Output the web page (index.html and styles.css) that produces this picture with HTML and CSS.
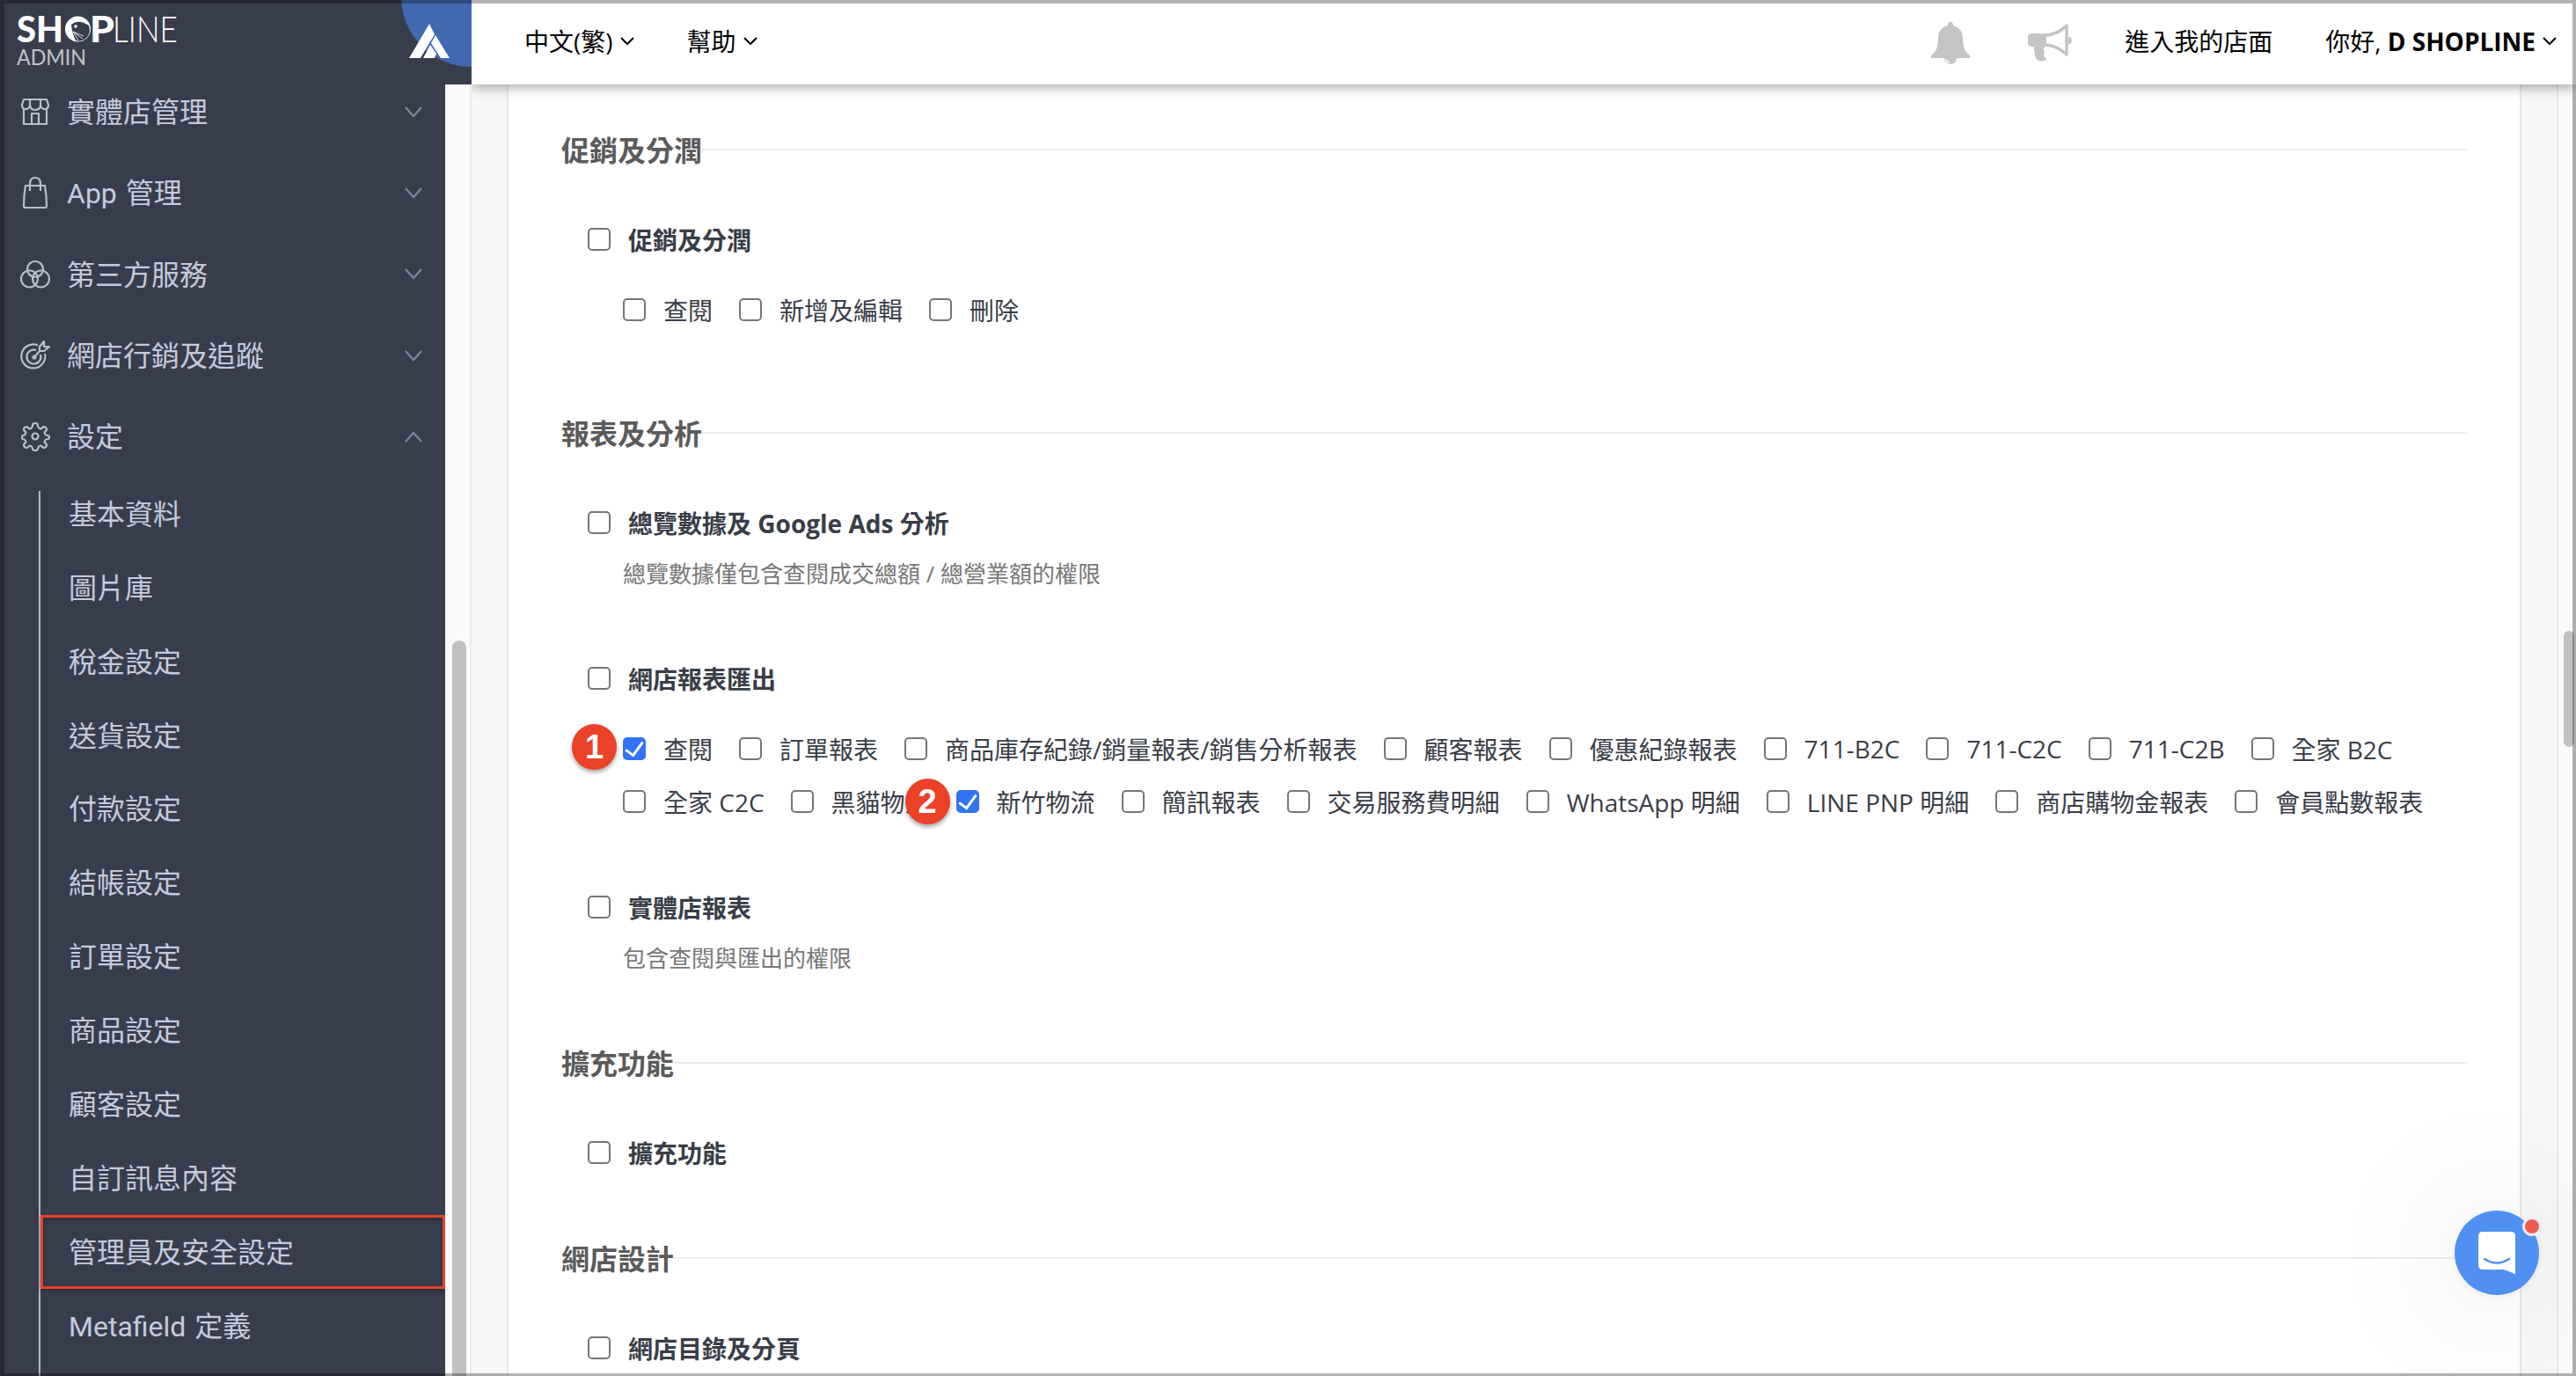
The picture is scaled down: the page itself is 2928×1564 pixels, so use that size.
FILE: index.html
```html
<!DOCTYPE html>
<html lang="zh-Hant">

<head>
	<meta charset="UTF-8">
	<meta name="viewport" content="width=device-width, initial-scale=1.0">
	<title>SHOPLINE Admin</title>
	<link rel="stylesheet" href="styles.css">
</head>

<body>
	<div class="app">
		<aside class="sidebar">
			<div class="brand">
				<svg class="logo" width="200" height="72" viewBox="0 0 200 72">
					<g fill="#fff">
						<text x="-1" y="43" font-size="41" font-weight="900" textLength="53" lengthAdjust="spacingAndGlyphs">SH</text>
						<text x="82" y="43" font-size="41" font-weight="900" textLength="28" lengthAdjust="spacingAndGlyphs">P</text>
						<text x="108" y="43" font-size="41" font-weight="300" textLength="74" lengthAdjust="spacingAndGlyphs">LINE</text>
						<circle cx="68.500" cy="28" r="14.500" />
					</g>
					<path d="M61 23q8-7 20 1 3 10-4 15-5 4-11 2-4-8-5-18z" fill="#383d4d" />
					<circle cx="66" cy="25" r="1.800" fill="#fff" />
					<path d="M63 31l11 8M63 31l6 10M63 31l12 5" stroke="#fff" stroke-width=".8" fill="none" />
					<text x="-1" y="69" font-size="25" fill="#c4c4c6" textLength="79" lengthAdjust="spacingAndGlyphs">ADMIN</text>
				</svg>
				<div class="brand-corner">
					<svg width="80" height="76" viewBox="0 0 80 76">
						<circle cx="80" cy="-4" r="80" fill="#4269b0" />
						<path d="M32 27L38 39 22 66H9z" fill="#fff" />
						<path d="M39 40L55 66H45L34 49z" fill="#fff" />
						<path d="M33 51L40 61 38 66H25z" fill="#fff" />
					</svg>
				</div>
			</div>
			<div class="sidebar-body">
				<nav class="nav">
					<a class="nav-item">
						<svg class="nav-icon" viewBox="0 0 32 32">
							<path d="M3 2h26l2 6q0 5-4 5t-5-4q-1 5-6 5t-6-5q-1 4-5 4t-4-5zM10 2v7M22 2v7M3 13v17h26V13M12 30V18h8v12" />
						</svg>
						<span class="nav-text">實體店管理</span>
						<svg class="nav-arrow" viewBox="0 0 20 13"><path d="M1 1l9 10 9-10" /></svg>
					</a>
					<a class="nav-item">
						<svg class="nav-icon" viewBox="0 0 32 32">
							<path d="M5 8h22q2 11 2 23 0 2-2 2H5q-2 0-2-2Q3 19 5 8zM10 14V6q0-7 6-7t6 7v8" />
						</svg>
						<span class="nav-text">App 管理</span>
						<svg class="nav-arrow" viewBox="0 0 20 13"><path d="M1 1l9 10 9-10" /></svg>
					</a>
					<a class="nav-item">
						<svg class="nav-icon" viewBox="0 0 32 32">
							<circle cx="16" cy="10" r="9" />
							<circle cx="9.500" cy="21" r="9.500" />
							<circle cx="22.500" cy="21" r="9.500" />
						</svg>
						<span class="nav-text">第三方服務</span>
						<svg class="nav-arrow" viewBox="0 0 20 13"><path d="M1 1l9 10 9-10" /></svg>
					</a>
					<a class="nav-item">
						<svg class="nav-icon" viewBox="0 0 32 32">
							<path d="M19 4.500A13.500 13.500 0 1 0 27 14M17 10a8 8 0 1 0 5 5M15 18l6-7V6l5-6v6h6l-6 5h-5" />
							<circle cx="15" cy="18" r="1.500" />
						</svg>
						<span class="nav-text">網店行銷及追蹤</span>
						<svg class="nav-arrow" viewBox="0 0 20 13"><path d="M1 1l9 10 9-10" /></svg>
					</a>
					<a class="nav-item">
						<svg class="nav-icon" viewBox="0 0 32 32">
							<path d="M13 4q0-3 3-3t3 3q0 2 2 3t3-1q2-2 4 0t0 4q-2 1-1 3t3 2q2 0 2 2t-2 2q-2 0-3 2t1 3q2 2 0 4t-4 0q-1-2-3-1t-2 3q0 2-3 2t-3-2q0-2-2-3t-3 1q-2 2-4 0t0-4q2-1 1-3t-3-2q-1 0-1-2t1-2q2 0 3-2T4 10q-2-2 0-4t4 0q1 2 3 1t2-3z" />
							<circle cx="16" cy="16" r="3.500" />
						</svg>
						<span class="nav-text">設定</span>
						<svg class="nav-arrow" viewBox="0 0 20 13"><path d="M1 12l9-10 9 10" /></svg>
					</a>
					<div class="subnav">
						<a class="subnav-item">基本資料</a>
						<a class="subnav-item">圖片庫</a>
						<a class="subnav-item">稅金設定</a>
						<a class="subnav-item">送貨設定</a>
						<a class="subnav-item">付款設定</a>
						<a class="subnav-item">結帳設定</a>
						<a class="subnav-item">訂單設定</a>
						<a class="subnav-item">商品設定</a>
						<a class="subnav-item">顧客設定</a>
						<a class="subnav-item">自訂訊息內容</a>
						<a class="subnav-item highlighted">管理員及安全設定</a>
						<a class="subnav-item">Metafield 定義</a>
					</div>
				</nav>
				<div class="nav-scroll"><div class="nav-scroll-thumb"></div></div>
			</div>
		</aside>

		<div class="main">
			<header class="topbar">
				<div class="topbar-link">中文(繁)<svg class="caret" viewBox="0 0 16 10"><path d="M1 1l7 7 7-7" /></svg></div>
				<div class="topbar-link">幫助<svg class="caret" viewBox="0 0 16 10"><path d="M1 1l7 7 7-7" /></svg></div>
				<div class="topbar-right">
					<svg class="bell" width="46" height="50" viewBox="0 0 46 50">
						<path d="M23 1q3 0 3 4 11 3 11 14 0 15 7 19 2 2 1 4H1q-1-2 1-4 7-4 7-19Q9 8 20 5q0-4 3-4zM16 42h14q-1 7-7 7t-7-7z" />
						<path d="M18 43q1 4 4 4" fill="none" stroke="#fff" stroke-width="1.500" />
					</svg>
					<svg class="horn" width="50" height="44" viewBox="0 0 50 44">
						<path d="M4 11h17v15h-1q-4 3-1 6-2 5 1 7l1 2q-9 4-12-2-2-5-2-13H4q-4 0-4-4v-7q0-4 4-4z" />
						<path d="M21 13Q34 12 44 2v33Q33 25 21 24" fill="none" stroke="#c4c4c4" stroke-width="3.500" stroke-linejoin="round" />
						<path d="M46 15q4 0 4 4t-4 4z" />
					</svg>
					<div class="topbar-link store">進入我的店面</div>
					<div class="topbar-link">你好,&nbsp;<b>D SHOPLINE</b><svg class="caret" viewBox="0 0 16 10"><path d="M1 1l7 7 7-7" /></svg></div>
				</div>
			</header>

			<div class="content">
				<div class="panel">
					<section class="section first">
						<h2 class="section-title"><span>促銷及分潤</span></h2>
						<div class="group">
							<label class="group-title"><input type="checkbox">促銷及分潤</label>
							<div class="options">
								<label class="option"><input type="checkbox">查閱</label>
								<label class="option"><input type="checkbox">新增及編輯</label>
								<label class="option"><input type="checkbox">刪除</label>
							</div>
						</div>
					</section>

					<section class="section">
						<h2 class="section-title"><span>報表及分析</span></h2>
						<div class="group">
							<label class="group-title"><input type="checkbox">總覽數據及 Google Ads 分析</label>
							<p class="hint">總覽數據僅包含查閱成交總額 / 總營業額的權限</p>
						</div>
						<div class="group">
							<label class="group-title"><input type="checkbox">網店報表匯出</label>
							<div class="options">
								<label class="option"><input type="checkbox" checked>查閱<span class="step step-one">1</span></label>
								<label class="option"><input type="checkbox">訂單報表</label>
								<label class="option"><input type="checkbox">商品庫存紀錄/銷量報表/銷售分析報表</label>
								<label class="option"><input type="checkbox">顧客報表</label>
								<label class="option"><input type="checkbox">優惠紀錄報表</label>
								<label class="option"><input type="checkbox">711-B2C</label>
								<label class="option"><input type="checkbox">711-C2C</label>
								<label class="option"><input type="checkbox">711-C2B</label>
								<label class="option"><input type="checkbox">全家 B2C</label>
								<label class="option"><input type="checkbox">全家 C2C</label>
								<label class="option"><input type="checkbox">黑貓物流</label>
								<label class="option"><input type="checkbox" checked>新竹物流<span class="step">2</span></label>
								<label class="option"><input type="checkbox">簡訊報表</label>
								<label class="option"><input type="checkbox">交易服務費明細</label>
								<label class="option"><input type="checkbox">WhatsApp 明細</label>
								<label class="option"><input type="checkbox">LINE PNP 明細</label>
								<label class="option"><input type="checkbox">商店購物金報表</label>
								<label class="option"><input type="checkbox">會員點數報表</label>
							</div>
						</div>
						<div class="group">
							<label class="group-title"><input type="checkbox">實體店報表</label>
							<p class="hint">包含查閱與匯出的權限</p>
						</div>
					</section>

					<section class="section">
						<h2 class="section-title"><span>擴充功能</span></h2>
						<div class="group">
							<label class="group-title"><input type="checkbox">擴充功能</label>
						</div>
					</section>

					<section class="section">
						<h2 class="section-title"><span>網店設計</span></h2>
						<div class="group">
							<label class="group-title"><input type="checkbox">網店目錄及分頁</label>
						</div>
					</section>
				</div>
				<div class="page-scroll"><div class="page-scroll-thumb"></div></div>
			</div>
		</div>
	</div>

	<div class="chat">
		<svg width="42" height="48" viewBox="0 0 42 48">
			<path d="M5 0h32q5 0 5 5v43l-13-5H5q-5 0-5-5V5q0-5 5-5z" fill="#fff" />
			<path d="M7 31q14 9 28 0" fill="none" stroke="#5190f3" stroke-width="2.500" stroke-linecap="round" />
		</svg>
		<span class="chat-dot"></span>
	</div>
	<div class="frame"></div>
</body>

</html>
```
FILE: styles.css
```css
* {
	box-sizing: border-box;
}

html,
body {
	margin: 0;
	height: 100%;
	overflow: hidden;
	background-color: #f7f7f7;
	color: #000;
	font-family: "Open Sans", "Noto Sans CJK TC", sans-serif;
	font-size: 28px;
}

.app {
	display: flex;
	height: 1564px;
}

/* sidebar */
.sidebar {
	display: flex;
	flex-direction: column;
	width: 536px;
	flex: none;
	z-index: 2;
}

.brand {
	display: flex;
	justify-content: space-between;
	height: 96px;
	flex: none;
	padding-left: 20px;
	background-color: #383d4d;
}

.logo {
	margin-top: 5px;
	font-family: Lato, sans-serif;
	overflow: visible;
}

.brand-corner {
	height: 76px;
}

.sidebar-body {
	display: flex;
	flex: 1;
	min-height: 0;
}

.nav {
	width: 506px;
	overflow: hidden;
	background-color: #383d4d;
	color: #c5cbde;
	font-family: Roboto, "Noto Sans CJK TC", sans-serif;
	font-size: 32px;
	word-spacing: 2px;
}

.nav-item {
	display: flex;
	align-items: center;
	height: 92.3px;
	padding: 0 26px 0 24px;
}

.nav-item:first-child {
	margin-top: -15px;
}

.nav-icon {
	width: 32px;
	height: 32px;
	overflow: visible;
	fill: none;
	stroke: #b9bfce;
	stroke-width: 2.2;
	stroke-linejoin: round;
}

.nav-text {
	flex: 1;
	margin-left: 20px;
	padding-top: 2px;
	line-height: 48px;
}

.nav-arrow {
	width: 20px;
	height: 13px;
	fill: none;
	stroke: #7f8698;
	stroke-width: 2.2;
}

.subnav {
	display: flow-root;
	margin: 16px 0 0 44px;
	padding-bottom: 20px;
	border-left: 2px solid #b5bac8;
}

.subnav-item {
	display: flex;
	align-items: center;
	height: 83.9px;
	padding: 0 0 5px 32px;
}

.subnav-item:first-child {
	margin-top: -16px;
}

.highlighted {
	padding-left: 29px;
	border: 3px solid #ec4126;
	box-shadow: 0 2px 5px rgba(0, 0, 0, .3), inset 0 2px 5px rgba(0, 0, 0, .3);
}

.nav-scroll {
	flex: 1;
	padding: 632px 4px 0 8px;
	background-color: #fafafa;
	border-right: 2px solid #ebebeb;
}

.nav-scroll-thumb {
	width: 16px;
	height: 900px;
	border-radius: 8px;
	background-color: #c1c1c1;
}

/* top bar */
.main {
	flex: 1;
	display: flex;
	flex-direction: column;
	min-width: 0;
}

.topbar {
	display: flex;
	align-items: center;
	gap: 60px;
	height: 96px;
	flex: none;
	padding: 0 22px 2px 60px;
	background-color: #fff;
	box-shadow: 0 2px 14px rgba(0, 0, 0, .4);
	z-index: 1;
}

.topbar-link {
	display: flex;
	align-items: center;
	line-height: 40px;
	white-space: nowrap;
}

.caret {
	width: 16px;
	height: 10px;
	margin-left: 8px;
	fill: none;
	stroke: #000;
	stroke-width: 2;
}

.topbar-right {
	display: flex;
	align-items: center;
	margin-left: auto;
}

.bell,
.horn {
	margin-top: 4px;
	fill: #c4c4c4;
}

.bell {
	margin-right: 65px;
}

.store {
	margin: 0 60px;
}

/* permission list */
.content {
	flex: 1;
	display: flex;
	min-height: 0;
}

.panel {
	flex: 1;
	margin: 0 40px;
	padding: 52px 60px 0;
	overflow: hidden;
	border: solid #e6e6e6;
	border-width: 0 2px;
	background-color: #fff;
}

.section.first {
	margin-bottom: 18px;
}

.section-title {
	display: flex;
	align-items: center;
	height: 44px;
	margin: 0 0 60px;
	color: #5a5a5a;
	font-size: 32px;
	font-weight: 600;
}

.section-title span {
	padding-bottom: 3px;
}

.section-title::after {
	content: "";
	flex: 1;
	height: 2px;
	background-color: #ededed;
}

.group {
	padding-bottom: 80px;
	color: #383d47;
}

.group:last-child {
	padding-bottom: 78px;
}

.group:has(.options) {
	padding-bottom: 70px;
}

.group-title {
	display: flex;
	align-items: center;
	height: 40px;
	padding-left: 30px;
	font-weight: 700;
}

.options {
	display: flex;
	flex-wrap: wrap;
	column-gap: 30px;
	margin-top: 30px;
	padding-left: 70px;
}

.option {
	position: relative;
	display: flex;
	align-items: center;
	height: 60px;
	white-space: nowrap;
}

.hint {
	height: 39px;
	margin: 18px 0 0;
	padding-left: 70px;
	color: #777;
	font-size: 26px;
	line-height: 40px;
}

input[type="checkbox"] {
	appearance: none;
	display: grid;
	place-items: center;
	width: 26px;
	height: 26px;
	flex: none;
	margin: 0 20px 0 0;
	border: 2px solid #767676;
	border-radius: 5px;
	background-color: #fff;
}

input[type="checkbox"]:checked {
	border-color: #3273f6;
	background-color: #3273f6;
}

input[type="checkbox"]:checked::after {
	content: "";
	width: 9px;
	height: 17px;
	margin-top: -4px;
	border: solid #fff;
	border-width: 0 3.5px 3.5px 0;
	transform: rotate(36deg);
}

.step {
	position: absolute;
	top: 4px;
	left: -58px;
	width: 51px;
	height: 52px;
	border-radius: 50%;
	background-color: #eb4127;
	box-shadow: 0 3px 5px rgba(0, 0, 0, .35);
	color: #fff;
	font: bold 38px/52px "Liberation Sans", sans-serif;
	text-align: center;
}

.step-one {
	top: 2px;
}

.page-scroll {
	width: 22px;
	padding: 621px 2px 0 6px;
	border-left: 2px solid #e8e8e8;
	background-color: #fafafa;
}

.page-scroll-thumb {
	height: 132px;
	border-radius: 7px;
	background-color: #c1c1c1;
}

/* floating chat button */
.chat {
	position: fixed;
	right: 42px;
	bottom: 92px;
	display: grid;
	place-items: center;
	width: 96px;
	height: 96px;
	border-radius: 50%;
	background-color: #5190f3;
	box-shadow: 0 2px 12px rgba(0, 0, 0, .06), 0 4px 160px rgba(0, 0, 0, .16);
	z-index: 3;
}

.chat-dot {
	position: absolute;
	top: 7px;
	right: -3px;
	width: 22px;
	height: 22px;
	border: 3px solid #efefef;
	border-radius: 50%;
	background-color: #ec5a52;
}

.frame {
	position: fixed;
	inset: 0;
	border: solid rgba(0, 0, 0, .3);
	border-width: 4px 4px 3px 5px;
	pointer-events: none;
	z-index: 4;
}
```
